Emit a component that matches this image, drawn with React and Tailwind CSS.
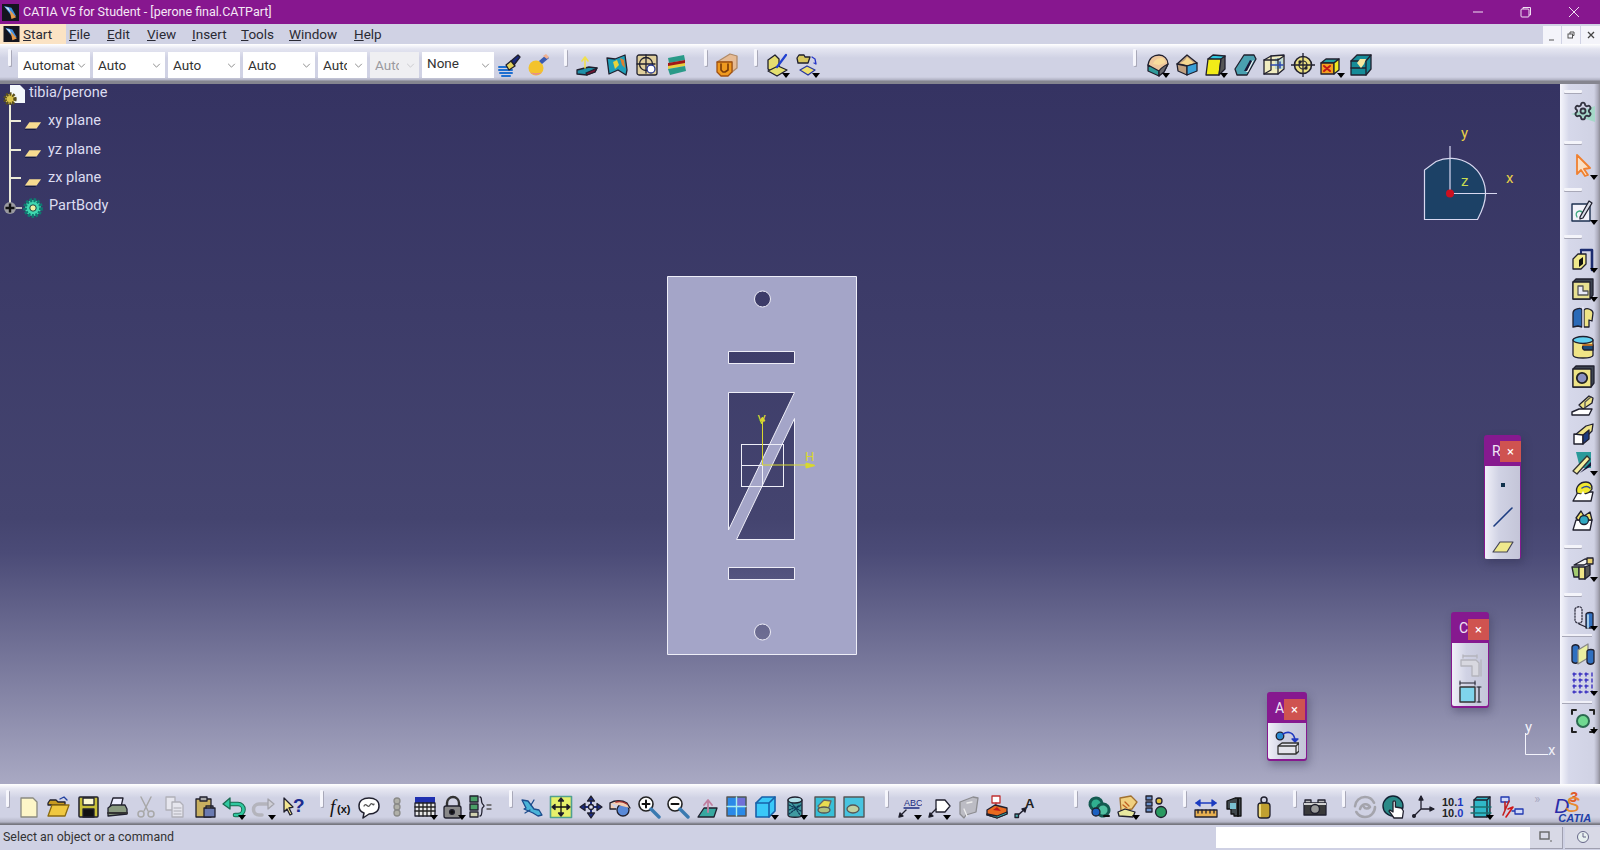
import { Settings } from "lucide-react";

const Svg = ({ children, className = "h-6 w-6" }) => (
  <svg viewBox="0 0 24 24" className={className} fill="none" stroke="#20202e" strokeWidth="1.3" strokeLinejoin="round" strokeLinecap="round">
    {children}
  </svg>
);

const AppGlyph = ({ className }) => (
  <svg viewBox="0 0 18 18" className={className}>
    <rect width="18" height="18" fill="#15151f" />
    <path d="M2 2l8 2 5 9-6-2z" fill="#3f8fe0" />
    <path d="M8 6l7 8-5 2z" fill="#e89a4a" />
    <path d="M3 3l4 1 2 5z" fill="#d8e8f8" />
  </svg>
);

// top toolbar
const Brush = () => <Svg><path d="M2 14h11M2 17h13M3 20h12M5 23h8" stroke="#1e6fd0" strokeWidth="2" /><path d="M14 8l7-6 2 2-6 8z" fill="#1a2a80" /><path d="M9 12l5-4 4 5-6 4z" fill="#e4d25a" /></Svg>;
const PaintBall = () => <Svg><circle cx="10" cy="15" r="7.5" fill="#f3c32c" stroke="none" /><path d="M4 19a8 8 0 0012 0 9 6 0 01-12 0z" fill="#e070c0" stroke="none" /><path d="M13 8l7-6 3 3-7 6z" fill="#3a5ab0" stroke="none" /><path d="M17 3l3-2 3 3-2 2z" fill="#f0b090" stroke="none" /></Svg>;
const SlabArrow = () => <Svg><path d="M2 17l12-3 8 1-2 4-8 3-10-1z" fill="#1f8fa8" /><path d="M11 20l9-4 2-1-2 4-8 3z" fill="#7a1530" /><path d="M10 15V5M7 8l3-4 3 4" stroke="#f0e050" strokeWidth="1.6" /></Svg>;
const SurfBlob = () => <Svg><path d="M2 5l8 1 10-4 2 15-1 5-8-5-9 4z" fill="#1f9fb8" /><path d="M8 9l4-2 2 5-4 4z" fill="#e9d33a" stroke="none" /><path d="M15 5l4 2 1 8-3-3z" fill="#e08030" stroke="none" /></Svg>;
const Target = () => <Svg><rect x="2" y="2" width="20" height="20" rx="2" fill="#e0cf9c" /><circle cx="11" cy="11" r="6.5" /><path d="M11 2v18M2 11h18" /><circle cx="16" cy="16" r="4" fill="#fff" stroke="#25358f" /></Svg>;
const Layers = () => <Svg><path d="M3 5l16-3 1 5-16 3z" fill="#2a9a88" stroke="none" /><path d="M3 10l17-3v5L3 15z" fill="#a01818" stroke="none" /><path d="M3 13l17-3v3L3 16z" fill="#e8d040" stroke="none" /><path d="M3 16l17-3 1 5-16 4z" fill="#2a9a88" stroke="none" /></Svg>;
const UBlock = () => <Svg><path d="M2 9L15 1l7 2v12l-5 4V9z" fill="#e6bb94" stroke="#b08a68" /><path d="M2 9h15v10l-4 4H6l-4-4z" fill="#ef9a20" stroke="#a05010" /><path d="M6 11v6l2 2h2l3-2v-6" stroke="#7a3a08" strokeWidth="1.6" /></Svg>;
const SketchPlane = () => <Svg><path d="M2 7l7-5 4 4v9l-7 4-4-3z" fill="#e4dc70" /><path d="M2 18l10-5 9 4-10 6z" fill="#e4e070" /><path d="M11 14l9-12" stroke="#2040d0" strokeWidth="2.2" /></Svg>;
const FolderPlane = () => <Svg><path d="M1 5l2-3h5l1 2h5l-2 6H2z" fill="#d8c860" /><path d="M16 4l3 2 1 5M20 11l-2-1" stroke="#2838c8" /><path d="M4 17l7-4 8 4-7 5z" fill="#eee070" stroke="#2838a0" /></Svg>;
const FilletTan = () => <Svg><path d="M2 12C3 5 8 2 13 2c5 0 9 4 9 9l-4 8-5 3z" fill="#eec79c" /><path d="M7 11c1-3 4-6 8-6 3 0 4 2 4 5l-6 2z" fill="#f8dc9c" stroke="none" /><path d="M2 12l11 6v5L2 18z" fill="#2f9a9a" /><path d="M13 18c2-3 5-5 9-7l-4 8-5 4z" fill="#6a6a70" /></Svg>;
const ChamferBox = () => <Svg><path d="M2 11l10-9 10 8-10 3z" fill="#c0a080" /><path d="M5 10c3-1 6-3 7-6l7 6-7 2z" fill="#f5d890" stroke="none" /><path d="M2 11l10 2v9l-9-4z" fill="#c0a080" /><path d="M12 13l10-3v8l-10 4z" fill="#3aa0d8" /></Svg>;
const YellowBox = () => <Svg><path d="M4 6l5-4 12 1-2 5z" fill="#30c8e0" /><path d="M4 6h13l-2 16H2z" fill="#f2ec18" /><path d="M17 6l4-3v13l-6 6z" fill="#555" /></Svg>;
const TealPara = () => <Svg><path d="M2 16l9-14h10l2 4-9 16H4z" fill="#4aa0b0" /><path d="M13 19l6-11 2-1-1 2-5 10z" fill="#f0f0f0" stroke="none" /><path d="M11 18l6-11 2 1-5 10z" fill="#181838" stroke="none" /></Svg>;
const WireBox = () => <Svg><path d="M2 7l7-4 13-1v14l-6 5H2z" fill="#f0ecc0" /><path d="M13 5h8v11h-8z" fill="#a0d0e0" opacity=".6" stroke="none" /><path d="M9 3v14l-7 4M16 6v15M2 7h14l6-4" /><path d="M9 12h12M18 9v6" stroke="#2c4ab0" strokeWidth="1.5" /></Svg>;
const Crosshair = () => <Svg><circle cx="12" cy="12" r="8.5" fill="#eadf80" strokeWidth="1.6" /><circle cx="12" cy="12" r="4" strokeWidth="1.2" /><path d="M12 0v24M0 12h24" /><circle cx="9" cy="9" r="1" fill="#333" /><circle cx="15" cy="15" r="1" fill="#333" /></Svg>;
const OrangeBox = () => <Svg><path d="M1 10l5-4h13l-5 4z" fill="#20a0a0" /><path d="M1 10h13v11H1z" fill="#f4a020" /><path d="M14 10l5-4v11l-5 4z" fill="#f0ea20" /><path d="M4 13l6 5M10 13l-6 5" stroke="#c01818" strokeWidth="2" /></Svg>;
const TealChest = () => <Svg><path d="M2 8l6-6h14v14l-5 6H2z" fill="#158c98" /><path d="M2 8h15l5-6M17 8v14M2 15h15" /><path d="M8 10l3-4h6l-2 5-3 4z" fill="#f5e8a0" stroke="none" /></Svg>;

// bottom toolbar, file group
const NewDoc = () => <Svg><path d="M4 3h12l4 4v15H4z" fill="#fdf6c8" stroke="#8a8a80" /></Svg>;
const OpenFolder = () => <Svg><path d="M2 8l2-3h6l2 2h7v3H2z" fill="#c89a20" /><path d="M2 21l4-11h17l-4 11z" fill="#f0c840" stroke="#8a6a10" /><path d="M14 4l4-2 3 3" stroke="#2040a0" /></Svg>;
const Floppy = () => <Svg><rect x="3" y="2" width="19" height="20" rx="1" fill="#c9c03a" strokeWidth="1.5" /><rect x="7" y="3" width="11" height="7" fill="#fdf9d0" /><rect x="7" y="14" width="11" height="8" fill="#111" /></Svg>;
const Printer = () => <Svg><path d="M8 3h10l-2 9H5z" fill="#eef" /><path d="M3 13l4-3h13l2 4v5l-19 2z" fill="#8a9a80" /><path d="M3 18h19" stroke="#333" strokeWidth="2" /></Svg>;
const Scissors = () => <Svg><g stroke="#a8a8a8" strokeWidth="1.5"><path d="M7 2l7 14M17 2l-7 14" /><circle cx="7" cy="19" r="3" /><circle cx="17" cy="19" r="3" /></g></Svg>;
const CopyDoc = () => <Svg><g fill="#e6e6ee" stroke="#b0b0b8"><path d="M3 2h9v13H3z" /><path d="M9 7h8l3 3v12H9z" /></g><path d="M11 13h7M11 16h7M11 19h7" stroke="#c0c0c8" /></Svg>;
const Paste = () => <Svg><rect x="3" y="4" width="15" height="18" fill="#c8b060" /><rect x="7" y="2" width="7" height="4" fill="#aaa" /><rect x="11" y="13" width="11" height="9" fill="#6a7ab0" /><path d="M13 13v-2h7v2" /></Svg>;
const Undo = () => <Svg><path d="M6 9h10a5 5 0 010 11h-3" stroke="#1a6a50" strokeWidth="4.6" /><path d="M6 9h10a5 5 0 010 11h-3" stroke="#30c8a0" strokeWidth="2.6" /><path d="M1 9l7-6v11z" fill="#30c8a0" stroke="#1a6a50" /></Svg>;
const Redo = () => <Svg><path d="M18 9H8a5 5 0 000 11h3" stroke="#b4b4bc" strokeWidth="3.5" /><path d="M23 9l-6-5v10z" fill="#cfcfd6" stroke="#a4a4ac" /></Svg>;
const WhatsThis = () => <Svg><path d="M3 3l9 9-4 1 3 6-2 1-3-6-3 3z" fill="#f2e590" /><text x="12" y="17" fontSize="19" fontWeight="700" fill="#1c2c90" stroke="none" fontFamily="Liberation Sans, sans-serif">?</text></Svg>;
const Fx = () => <Svg><text x="1" y="18" fontSize="19" fontFamily="Liberation Serif, serif" fontStyle="italic" fill="#111" stroke="none">f</text><text x="8" y="18" fontSize="11" fontWeight="700" fontFamily="Liberation Sans, sans-serif" fill="#111" stroke="none">(x)</text></Svg>;
const Bubble = () => <Svg><path d="M12 3c6 0 10 3 10 8s-4 8-10 8l-6 4 1-5c-3-1-5-4-5-7 0-5 4-8 10-8z" fill="#fff" strokeWidth="1.5" /><path d="M7 11c2-4 4 3 6-1s3 2 4-1" stroke="#555" /></Svg>;
const Lights = () => <Svg><g fill="#b0b0a8" stroke="#8a8a88"><circle cx="12" cy="6" r="3" /><circle cx="12" cy="12" r="3" /><circle cx="12" cy="18" r="3" /></g></Svg>;
const TableGrid = () => <Svg><rect x="2" y="2" width="20" height="6" fill="#2030b0" stroke="none" /><rect x="2" y="8" width="20" height="13" fill="#e8e8e8" /><path d="M2 12h20M2 16h20M6 8v13M10 8v13M14 8v13M18 8v13" stroke="#222" /></Svg>;
const Padlock = () => <Svg><path d="M6 12V8a6 6 0 0112 0v4" stroke="#333" strokeWidth="2.4" /><rect x="3" y="11" width="17" height="12" rx="2" fill="#888" /><circle cx="11" cy="17" r="2.4" fill="#111" /></Svg>;
const Bracket = () => <Svg><rect x="1" y="1" width="8" height="6" fill="#4aa068" /><rect x="1" y="9" width="8" height="6" fill="#4aa068" /><rect x="1" y="17" width="8" height="5" fill="#d0d0b0" /><path d="M11 2c2 0 1 4 2 6s2 2 2 3-2 1-2 3 0 7-2 7" /><path d="M18 10h4M18 14h4" stroke="#555" /></Svg>;

// view group
const FlyPlane = () => <Svg><path d="M2 5l6 1 6 8 5 1 3 5-4 1-5-3-9-4 2-1-4-8z" fill="#4ab4d8" stroke="#1c4c8c" /><path d="M14 5l-3 5M5 18l5-3" stroke="#1c4c8c" /></Svg>;
const FitAll = () => <Svg><rect x="1.5" y="1.5" width="21" height="21" fill="#e6f06a" stroke="#50a090" strokeWidth="1.6" /><path d="M12 5v14M5 12h14" stroke="#111" /><path d="M12 3l-2.5 3h5zM12 21l-2.5-3h5zM3 12l3-2.5v5zM21 12l-3-2.5v5z" fill="#111" /></Svg>;
const PanArrows = () => <Svg><path d="M12 3v18M3 12h18" stroke="#1c2c80" strokeWidth="2" /><path d="M12 1l-3.5 5h7zM12 23l-3.5-5h7zM1 12l5-3.5v7zM23 12l-5-3.5v7z" fill="#1c2c80" /><circle cx="12" cy="12" r="2.5" fill="#e0e0f0" /></Svg>;
const RotateHand = () => <Svg><circle cx="15" cy="15" r="6" fill="#5a8ad8" /><path d="M2 8c5-3 12-3 17 0l3 5M2 8v6h6" fill="#f4cdb0" /><path d="M8 7c3-1 8 0 11 2" stroke="#a03030" strokeWidth="1.5" /></Svg>;
const ZoomIn = () => <Svg><circle cx="9" cy="9" r="7" fill="#fff" stroke="#222" strokeWidth="1.6" /><path d="M14 14l8 8" stroke="#3a7ab0" strokeWidth="3.4" /><path d="M5.5 9h7M9 5.5v7" stroke="#111" strokeWidth="2" /></Svg>;
const ZoomOut = () => <Svg><circle cx="9" cy="9" r="7" fill="#fff" stroke="#222" strokeWidth="1.6" /><path d="M14 14l8 8" stroke="#3a7ab0" strokeWidth="3.4" /><path d="M5.5 9h7" stroke="#111" strokeWidth="2" /></Svg>;
const NormalView = () => <Svg><path d="M2 22l6-9h13l-3 9z" fill="#38a8a0" /><path d="M12 17V6M8 10l4-5 4 5" stroke="#c080a0" strokeWidth="1.8" /></Svg>;
const FourPane = () => <Svg><rect x="2" y="2" width="19" height="19" fill="#2a8ae8" stroke="#555" strokeWidth="1.5" /><path d="M12 3h8v8h-8z" fill="#7070d8" stroke="none" /><path d="M11.5 2v19M2 11.5h19" stroke="#aee" strokeWidth="1.4" /></Svg>;
const BlueCube = () => <Svg><path d="M2 8l6-6h13v14l-6 6H2z" fill="#3ac8f8" stroke="#1860a8" strokeWidth="1.6" /><path d="M2 8h13l6-6M15 8v14" stroke="#1860a8" strokeWidth="1.6" /></Svg>;
const PatternCyl = () => <Svg><path d="M4 5v15c0 3 14 3 14 0V5" fill="#3f9aa0" /><ellipse cx="11" cy="5" rx="7" ry="3" fill="#b0e0e8" /><path d="M5 10l12 6M5 15l12-5M5 19l12-9M8 8l8 12" stroke="#0f3a58" strokeDasharray="1.5 1.5" /></Svg>;
const PicYellow = () => <Svg><rect x="2" y="2" width="20" height="20" fill="#38c0d8" stroke="#555" strokeWidth="1.4" /><path d="M5 11l6-6 7 1-2 6-8 3z" fill="#e8dc50" stroke="#666" /><ellipse cx="11" cy="15" rx="6" ry="3" fill="#b0c080" stroke="#555" /></Svg>;
const PicCyan = () => <Svg><rect x="2" y="2" width="20" height="20" fill="#48c4e0" stroke="#555" strokeWidth="1.4" /><ellipse cx="11" cy="14" rx="6" ry="4" fill="#c0d0a0" stroke="#555" /></Svg>;

// annotation group
const AbcArrow = () => <Svg><text x="6" y="11" fontSize="9" fontFamily="Liberation Sans, sans-serif" fill="#1c2c80" stroke="none">ABC</text><path d="M6 13h15" stroke="#1c2c80" /><path d="M8 15L2 21" /><path d="M1 22l1-4 3 3z" fill="#111" /></Svg>;
const TagArrow = () => <Svg><path d="M9 5h9l5 6-5 6H9z" fill="#fff" /><path d="M9 14L3 20" /><path d="M2 22l1-4 3 3z" fill="#111" /></Svg>;
const GrayFlag = () => <Svg><path d="M4 7l13-5 5 1-2 14-10 3-2 3-4-4z" fill="#bcbcc4" stroke="#8c8c90" /><path d="M8 14l3 7M11 8l5-1" stroke="#eee" /></Svg>;
const RedStack = () => <Svg><rect x="7" y="1" width="8" height="7" fill="#fff" stroke="#c03030" /><path d="M11 8v4" stroke="#c03030" /><path d="M2 15l8-5 12 3v6l-10 4-10-3z" fill="#e86a20" /><path d="M2 19l10 2 10-4v2l-10 4-10-3z" fill="#38b8b0" /><path d="M8 15l4-3 4 4z" fill="#c01818" stroke="none" /></Svg>;
const AArrow = () => <Svg><text x="11" y="13" fontSize="13" fontWeight="700" fontFamily="Liberation Sans, sans-serif" fill="#222" stroke="none">A</text><path d="M3 21l9-8" strokeWidth="1.6" /><rect x="1" y="19" width="3.5" height="3.5" fill="#4ab0b0" /><path d="M12 13l-4 1 3 3z" fill="#111" /></Svg>;

// analysis group
const GreenGears = () => <Svg><circle cx="9" cy="9" r="6" fill="#30b090" stroke="#145a50" strokeWidth="3" strokeDasharray="2 1.2" /><circle cx="16" cy="15" r="6" fill="#50c0a0" stroke="#145a50" strokeWidth="3" strokeDasharray="2 1.2" /><circle cx="9" cy="17" r="4" fill="#1c60c0" /><path d="M17 21h5" stroke="#111" strokeWidth="2" /></Svg>;
const PaperFold = () => <Svg><path d="M4 3l11-2 6 6-5 7-11 2z" fill="#f0d080" stroke="#a07030" /><path d="M2 17l7-3 10 3-2 5-14-1z" fill="#e8e8a0" /><path d="M9 7l4 4M7 10l4 3" stroke="#c06020" /></Svg>;
const TreeBlocks = () => <Svg><rect x="1" y="1" width="6" height="4" fill="#6a90c8" /><rect x="1" y="7" width="6" height="4" fill="#6a90c8" /><rect x="1" y="13" width="6" height="4" fill="#6a90c8" /><circle cx="16" cy="17" r="5.5" fill="#2a9a60" /><circle cx="14" cy="6" r="3" fill="#e0c040" /></Svg>;
const RulerArrow = () => <Svg><path d="M2 8h20" stroke="#1c3cc0" strokeWidth="1.4" /><path d="M2 8l4-3v6zM22 8l-4-3v6z" fill="#1c3cc0" stroke="#1c3cc0" /><rect x="1" y="15" width="22" height="7" fill="#e8b050" /><path d="M4 15v3M8 15v3M12 15v3M16 15v3M20 15v3" /></Svg>;
const DarkBox = () => <Svg><path d="M4 6l8-3h6v18h-7v-2H8v-5H4z" fill="#40484c" stroke="#111" /><path d="M7 8h6v6H7z" fill="#7ac0d0" stroke="none" /><path d="M15 4v17" stroke="#111" strokeWidth="2" /></Svg>;
const Weight = () => <Svg><circle cx="12" cy="5" r="3" strokeWidth="1.5" /><rect x="6" y="8" width="12" height="15" rx="3" fill="#c0a030" /><path d="M8 10v11" stroke="#eedc80" strokeWidth="2" /></Svg>;
const Camera = () => <Svg><path d="M1 8h22v12H1z" fill="#3a3a3a" /><rect x="2" y="5" width="6" height="3" fill="#bbb" /><rect x="15" y="5" width="7" height="3" fill="#bbb" /><path d="M1 8h22v2H1z" fill="#d0d0d0" stroke="none" /><circle cx="12" cy="14" r="4.5" fill="#999" strokeWidth="1.4" /></Svg>;
const Swirl = () => <Svg><g stroke="#a4a4ac" strokeWidth="2.6"><circle cx="12" cy="12" r="10" strokeDasharray="26 6" /><path d="M7 14c2-6 8-6 10-2-2 2-5 2-6 0" /></g></Svg>;
const GlobeHand = () => <Svg><circle cx="11" cy="11" r="10" fill="#2a8a88" stroke="#123" strokeWidth="1.4" /><path d="M12 23l-5-7 1-1 3 2V7a1.2 1.2 0 012.4 0v5l6 1 2 3-1 7z" fill="#fff" /></Svg>;
const Axes = () => <Svg><path d="M10 14V2M10 14h12M10 14l-7 7" strokeWidth="1.3" /><path d="M10 1L8 5h4zM23 14l-4-2v4z" fill="#222" /><circle cx="3" cy="21" r="1.4" fill="#222" /></Svg>;
const Numbers = () => <Svg><text x="1" y="11" fontSize="11" fontWeight="700" fontFamily="Liberation Sans, sans-serif" fill="#222" stroke="none">10.<tspan fill="#1c38c0">1</tspan></text><text x="1" y="22" fontSize="11" fontWeight="700" fontFamily="Liberation Sans, sans-serif" fill="#222" stroke="none">10.<tspan fill="#1c38c0">0</tspan></text></Svg>;
const TealPrism = () => <Svg><path d="M4 5l3-3h13v17l-3 3H4z" fill="#30b8c8" strokeWidth="1.3" /><path d="M4 5h13l3-3M17 5v17" /><path d="M1 12h20M1 18h20" stroke="#187070" /></Svg>;
const SwapLink = () => <Svg><rect x="1" y="2" width="8" height="5" fill="#d0d8f8" stroke="#2038b0" /><path d="M5 7v8M9 6L3 20" stroke="#c02020" strokeWidth="1.6" /><path d="M8 14l5-2-7 10" stroke="#d01818" strokeWidth="1.6" /><path d="M12 16h4" stroke="#2038b0" /><rect x="15" y="14" width="8" height="5" fill="#d0d8f8" stroke="#2038b0" /></Svg>;

// right rail
const GearWedge = () => <div className="relative flex h-7 w-7 items-center justify-center"><div className="absolute h-0 w-0 translate-y-[3px] border-y-[8px] border-r-[24px] border-y-transparent border-r-[#a5d8c8]" /><Settings className="relative h-[20px] w-[20px] text-[#333340]" strokeWidth={2.2} /></div>;
const OrangeCursor = () => <Svg><path d="M6 2l13 13-6 1 4 6-3 1-4-6-4 4z" fill="#fbe0c4" stroke="#f08030" strokeWidth="1.8" /></Svg>;
const SketchPen = () => <Svg><rect x="1" y="5" width="18" height="17" fill="#f2f2fa" stroke="#1c3050" strokeWidth="1.4" /><path d="M6 18c-3-5 3-8 6-4" stroke="#40a880" /><path d="M9 18l9-16 3 2-9 15-3 1z" fill="#d8dce8" /></Svg>;
const PadIcon = () => <Svg><path d="M10 2h11v20" stroke="#1c2c70" strokeWidth="2.6" /><path d="M10 2v7" stroke="#1c2c70" strokeWidth="2" /><path d="M2 11l5-5h8v10l-5 5H2z" fill="#f2ea8c" /><path d="M8 12l4-3v7l-4 3z" fill="#111" stroke="none" /></Svg>;
const PocketIcon = () => <Svg><path d="M2 5l3-3h17v16l-3 4H2z" fill="#3c4450" /><rect x="2" y="5" width="17" height="17" fill="#e8e090" /><path d="M7 9h5v5h5v4H7z" fill="#e8e8f8" stroke="#555" /></Svg>;
const ShaftIcon = () => <Svg><path d="M2 7c0-4 8-6 9-3v17l-4-1-5 1z" fill="#2a6ab8" /><path d="M13 4c3-3 9 0 9 3l-1 8-3-1v7h-5z" fill="#efe486" /><path d="M12 1v22" stroke="#eef" strokeWidth="1.2" /></Svg>;
const GrooveCyl = () => <Svg><path d="M2 5v15c0 4 20 4 20 0V5" fill="#efe486" /><ellipse cx="12" cy="5" rx="10" ry="3.5" fill="#60d0f0" /><path d="M22 10H13c-2 1-2 4 0 5h9z" fill="#1c4a78" /><path d="M12 10h9" stroke="#e08020" strokeWidth="1.6" /></Svg>;
const HoleSquare = () => <Svg><path d="M2 5l3-3h18v17l-3 4H2z" fill="#3c4450" /><rect x="2" y="5" width="18" height="18" fill="#efe486" /><circle cx="11" cy="14" r="5.2" fill="#8a90c0" stroke="#222" strokeWidth="1.8" /></Svg>;
const RibIcon = () => <Svg><path d="M8 12l10-9 4 2-1 5-9 6z" fill="#efe486" /><path d="M14 16V9l6-5" stroke="#555" /><path d="M1 22v-3l7-3h13l-3 6z" fill="#fff" strokeWidth="1.4" /></Svg>;
const SlotIcon = () => <Svg><path d="M4 13l11-9 7-2-1 7-6 6z" fill="#efe486" /><path d="M3 22V12l9 1v9z" fill="#fff" strokeWidth="1.4" /><path d="M12 22v-9l6-5v9z" fill="#1c3c80" /></Svg>;
const LoftIcon = () => <Svg><path d="M5 1h15v16H9z" fill="#2a9a9a" stroke="none" /><path d="M9 22l11-7v-4" fill="#181838" stroke="none" /><path d="M2 20L16 5l3 3L6 23z" fill="#f5eda0" stroke="#333" /></Svg>;
const BlobIcon = () => <Svg><path d="M2 21l5-9h15l-2 9z" fill="#fff" strokeWidth="1.3" /><path d="M6 13c-2-6 3-11 9-11 4 0 6 3 6 7-3 5-8 6-15 4z" fill="#f0e830" /><path d="M11 8c3-2 6-2 8 0" stroke="#2848a0" strokeWidth="1.5" /><path d="M8 18l4-7 4 7z" fill="#fff" stroke="none" /></Svg>;
const SurfBox = () => <Svg><path d="M2 21l3-10h16l-2 10z" fill="#fff" strokeWidth="1.3" /><path d="M5 9l5-7 3 5 6-4 2 8H7z" fill="#f0e06a" /><circle cx="13" cy="11" r="4.5" fill="#30a8c0" /></Svg>;
const BadgeBox = () => <Svg><path d="M3 8l11-6 8 1-9 5z" fill="#f4f4f4" /><path d="M1 10h7v10H3z" fill="#a4cc70" /><path d="M8 10h6v12H8z" fill="#efe486" /><path d="M14 10l5-2v10l-5 4z" fill="#555" /><rect x="16" y="1" width="6" height="6" fill="#e8d070" /></Svg>;
const GhostCyl = () => <Svg><path d="M4 3c2-3 6-3 7 0v12c-1 3-5 3-7 0z" strokeDasharray="1.5 1.5" stroke="#334" fill="#e0e0f0" /><path d="M8 18l7 3" /><path d="M15 8c1-2 7-2 7 0v14h-7z" fill="#3070c0" /><path d="M17 9v13" stroke="#c0e0f0" strokeWidth="1.6" /></Svg>;
const MirrorIcon = () => <Svg><path d="M1 5c1-3 6-3 7 0v14c-1 3-6 3-7 0z" fill="#3070c0" /><path d="M7 8l10-6v14L7 22z" fill="#eaf0a0" stroke="#888" /><path d="M16 9c1-2 7-2 7 0v11c-1 3-6 3-7 0z" fill="#3070c0" /></Svg>;
const DotGrid = () => <Svg><path d="M2 3h18M2 9h18M2 15h18M2 21h18M3 2v20M9 2v20M15 2v20M21 2v20" stroke="#3a30c0" strokeWidth="1.4" strokeDasharray="3 3" /></Svg>;
const ScaleRing = () => <Svg><circle cx="12" cy="12" r="6" fill="#70d890" stroke="#2c6a50" strokeWidth="2" /><path d="M1 5V1h4M23 5V1h-4M1 19v4h4M23 19v4h-4" stroke="#222" strokeWidth="2" /></Svg>;

// floating bars
const PointDot = () => <Svg><rect x="10" y="10" width="4" height="4" fill="#11324c" stroke="none" /></Svg>;
const LineIcon = () => <Svg><path d="M3 21L21 3" stroke="#1c3c80" strokeWidth="1.6" /></Svg>;
const PlaneIcon = () => <Svg><path d="M2 18l7-10h13l-6 10z" fill="#efe98c" stroke="#445" strokeWidth="1.2" /></Svg>;
const GrayCorner = () => <Svg><g stroke="#b4b4bc"><path d="M5 2h14M5 1v3M19 1v3" /><path d="M3 6h15l3 3v13h-7V12H3z" fill="#d8d8e0" /><path d="M23 6v16" /></g></Svg>;
const DimBox = () => <Svg><rect x="2" y="7" width="15" height="15" fill="#7fd4ec" stroke="#333" strokeWidth="1.4" /><path d="M2 3h15M21 7v15" strokeWidth="1.2" /><path d="M2 1v4M17 1v4M19 7h4M19 22h4" strokeWidth="1" /></Svg>;
const SphereToBox = () => <Svg><circle cx="5" cy="5" r="3.8" fill="#2a8ad0" /><path d="M8 3c5-3 11-2 12 6" stroke="#2038c0" strokeWidth="1.6" /><path d="M20 11l-3-3h6z" fill="#2038c0" stroke="#2038c0" /><path d="M3 15l4-3h17l-3 3zM3 15h18v8H3zM21 15l3-3v8l-3 3z" fill="#e4e4ec" stroke="#333" strokeWidth="1.3" /></Svg>;

const Drop = () => <span className="absolute bottom-0 left-[19px] h-0 w-0 border-x-[4px] border-t-[5px] border-x-transparent border-t-black" />;

const Group = ({ items, slot, className = "" }) => (
  <div className={`flex ${className}`}>
    {items.map(([Icon, drop], i) => (
      <div key={i} className={`relative flex h-[26px] shrink-0 items-center justify-center ${slot}`}>
        <Icon />
        {drop && <Drop />}
      </div>
    ))}
  </div>
);

const Grip = ({ className = "" }) => <div className={`h-[17px] w-[3px] shrink-0 self-start rounded-[1px] bg-[#f6f6fc] shadow-[1px_1px_0_#a8a8b8] ${className}`} />;

const Combo = ({ label, w, disabled, none, clip }) => (
  <div className={`flex h-[26px] items-center justify-between pl-[5px] pr-[4px] ${w} ${disabled ? "bg-[#efeff2] text-[#9a9aa0]" : "bg-white text-[#333]"}`}>
    <span className={`block overflow-hidden whitespace-nowrap ${clip ? "w-[24px]" : ""} ${none ? "-translate-y-[2px]" : ""}`}>{label}</span>
    <svg viewBox="0 0 10 6" className="h-[5px] w-[9px]" fill="none" stroke={disabled ? "#c4c4c8" : "#777"}><path d="M1 1l4 4 4-4" /></svg>
  </div>
);

const Handle = ({ className = "" }) => <div className={`ml-[4px] h-[3px] w-[18px] shrink-0 rounded-[1px] bg-[#f4f4fa] shadow-[0_1px_0_#a8a8b8] ${className}`} />;
const RailIcon = ({ Icon, drop, className = "h-[29px]" }) => (
  <div className={`relative mr-[3px] flex w-[29px] shrink-0 items-center justify-center self-end ${className}`}>
    <Icon />
    {drop && <span className="absolute bottom-[1px] left-[22px] h-0 w-0 border-x-[4px] border-t-[5px] border-x-transparent border-t-black" />}
  </div>
);

const Floater = ({ letter, pos, closePos, children }) => (
  <div className={`absolute flex flex-col overflow-hidden rounded-[3px] bg-[#86198f] shadow-[2px_4px_8px_rgba(40,40,70,0.35)] ${pos}`}>
    <div className="relative h-[31px] shrink-0 pl-[8px] pt-[7px] text-[14px] leading-[18px] text-[#f0e4f4]">
      {letter}
      <div className={`absolute flex h-[21px] w-[21px] items-center justify-center bg-[#cf5350] text-[13px] leading-none text-white ${closePos}`}>×</div>
    </div>
    <div className="mx-[1px] mb-[2px] flex flex-1 flex-col items-center rounded-b-[2px] bg-[linear-gradient(to_right,#f0f0f8,#d0d2e4_40%,#c4c5d8)]">{children}</div>
  </div>
);

const TreeRow = ({ icon, label, className }) => (
  <div className={`flex items-center ${className}`}>
    {icon}
    <span className="whitespace-nowrap text-[14.5px] text-[#dcdcf0]">{label}</span>
  </div>
);

const TreePlane = () => (
  <svg viewBox="0 0 20 12" className="ml-[24px] mr-[6px] mt-[8px] h-[12px] w-[18px]">
    <path d="M1 10l5-7h13l-5 7z" fill="#f7dc90" />
    <path d="M1 11h12" stroke="#111a3c" />
  </svg>
);

const menus = [
  ["F", "ile", "w-[38px]"],
  ["E", "dit", "w-[40px]"],
  ["V", "iew", "w-[45px]"],
  ["I", "nsert", "w-[49px]"],
  ["T", "ools", "w-[48px]"],
  ["W", "indow", "w-[65px]"],
  ["H", "elp", "w-[40px]"],
];

export default function App() {
  return (
    <div className="flex h-[850px] w-[1600px] flex-col overflow-hidden bg-[#d0d2e4] font-['Roboto',sans-serif] text-[13.5px]">
      <div className="flex h-6 shrink-0 items-center bg-[#87178f] pl-[2px] text-white">
        <AppGlyph className="h-[17px] w-[17px]" />
        <span className="ml-[4px] text-[12.5px] text-[#f5e8f6]">CATIA V5 for Student - [perone final.CATPart]</span>
        <div className="ml-auto flex pr-[2px]">
          <div className="flex h-6 w-12 items-center justify-center"><svg viewBox="0 0 12 12" className="h-3 w-3" stroke="#f0e0f2"><path d="M1 6h10" /></svg></div>
          <div className="flex h-6 w-12 items-center justify-center"><svg viewBox="0 0 12 12" className="h-3 w-3" fill="none" stroke="#f0e0f2"><rect x="1" y="3" width="8" height="8" rx="1" /><path d="M3 3V1.5h7.5V9H9" /></svg></div>
          <div className="flex h-6 w-12 items-center justify-center"><svg viewBox="0 0 12 12" className="h-3 w-3" stroke="#f0e0f2"><path d="M1 1l10 10M11 1L1 11" /></svg></div>
        </div>
      </div>

      <div className="flex h-5 shrink-0 items-center bg-[#d0d2e4] text-[#2a2a34]">
        <div className="flex h-5 w-[66px] items-center bg-[#fbe3c4] pl-[3px]">
          <AppGlyph className="h-[16px] w-[17px]" />
          <span className="ml-[3px]"><u>S</u>tart</span>
        </div>
        <div className="ml-[3px] flex">
          {menus.map(([first, rest, w]) => (
            <span key={first} className={w}><u>{first}</u>{rest}</span>
          ))}
        </div>
        <div className="ml-auto flex gap-[1px] pt-[1px] text-[#444]">
          <div className="flex h-[18px] w-[18px] items-end justify-center bg-[#f4f4fa] pb-[3px]"><svg viewBox="0 0 8 8" className="h-2 w-2" stroke="#555"><path d="M1 7h5" /></svg></div>
          <div className="flex h-[18px] w-[18px] items-center justify-center bg-[#f4f4fa]"><svg viewBox="0 0 8 8" className="h-2 w-2" fill="none" stroke="#555"><rect x="1" y="3" width="4.5" height="4" /><path d="M3 3V1h4v3.5H5.5" /></svg></div>
          <div className="flex h-[18px] w-[19px] items-center justify-center bg-[#f4f4fa]"><svg viewBox="0 0 8 8" className="h-2 w-2" stroke="#444" strokeWidth="1.3"><path d="M1 1l6 6M7 1L1 7" /></svg></div>
        </div>
      </div>

      <div className="flex h-10 shrink-0 items-center pt-[2px] bg-[linear-gradient(to_bottom,#ffffff_0,#e4e5f1_5px,#d0d2e4_14px,#d0d2e4_33px,#b0b1c2_36px,#85858f_37px,#85858f_40px)]">
        <Grip className="ml-[8px] mt-[3px]" />
        <div className="ml-[7px] flex gap-[3px]">
          <Combo label="Automat" w="w-[72px]" />
          <Combo label="Auto" w="w-[72px]" />
          <Combo label="Auto" w="w-[72px]" />
          <Combo label="Auto" w="w-[72px]" />
          <Combo label="Auto" w="w-[49px]" clip />
          <Combo label="Auto" w="w-[49px]" clip disabled />
          <Combo label="None" w="w-[72px]" none />
        </div>
        <Group slot="w-[29.5px]" items={[[Brush], [PaintBall]]} />
        <Grip className="ml-[11px] mt-[3px]" />
        <Group slot="w-[30px]" className="ml-[4.5px]" items={[[SlabArrow], [SurfBlob], [Target], [Layers]]} />
        <Grip className="ml-[12px] mt-[3px]" />
        <Group slot="w-[29px]" className="ml-[5.5px]" items={[[UBlock]]} />
        <Grip className="ml-[12.5px] mt-[3px]" />
        <Group slot="w-[29.5px]" className="ml-[6.75px]" items={[[SketchPlane, true], [FolderPlane, true]]} />
        <Grip className="ml-[311px] mt-[3px]" />
        <Group slot="w-[29.1px]" className="ml-[6.75px]" items={[[FilletTan, true], [ChamferBox], [YellowBox, true], [TealPara], [WireBox], [Crosshair], [OrangeBox, true], [TealChest]]} />
      </div>

      <div className="flex min-h-0 flex-1">
        <div className="relative flex-1 bg-[linear-gradient(to_bottom,#353362_0%,#44446f_62%,#4b4b77_67%,#a9a9c3_100%)]">
          <svg viewBox="0 84 1560 700" className="absolute inset-0 h-full w-full" fontFamily="Roboto, sans-serif">
            <path
              fillRule="evenodd"
              fill="#a4a5c8"
              stroke="#eeeef8"
              d="M667.5 276.5H856.5V654.5H667.5Z M754.5 299a8 8 0 1016 0a8 8 0 10-16 0Z M754.5 632a8 8 0 1016 0a8 8 0 10-16 0Z M728.5 351.5H794.5V363.5H728.5Z M728.5 567.5H794.5V579.5H728.5Z M728.5 392.5H794.5L728.5 530Z M794.5 418.5V539.5H736.5Z"
            />
            <g stroke="#eeeef8" fill="none">
              <rect x="741.5" y="444.5" width="42" height="42" />
              <path d="M741.5 465.5H762.5M762.5 465.5V486.5" />
            </g>
            <g stroke="#d8d82e" fill="none">
              <path d="M762.5 465V420M762.5 465H814" />
              <path d="M806 463l9 2.5-9 2.5z" fill="#d8d82e" />
              <path d="M760 421l2.5-4 2.5 4z" fill="#d8d82e" />
            </g>
            <text x="757.5" y="424" fontSize="13" fill="#d8d82e">V</text>
            <text x="805" y="461" fontSize="13" fill="#d8d82e">H</text>

            <path d="M1424.5 219.5V170L1436 161.5A35 35 0 0 1 1485.5 194c0 9-4 18-8 25.5z" fill="#1c4166" stroke="#d8d8f0" strokeWidth="1.2" />
            <path d="M1450 146V193M1450 193.5H1497" stroke="#d8d8f0" strokeWidth="1.2" />
            <circle cx="1450" cy="193.5" r="4" fill="#cc0f1f" />
            <text x="1461" y="186" fontSize="15" fill="#c8dc50">z</text>
            <text x="1461" y="138" fontSize="15" fill="#e8d048">y</text>
            <text x="1506" y="183" fontSize="15" fill="#e8d048">x</text>

            <path d="M1525.5 733V754.5H1548" stroke="#f4f4fc" fill="none" />
            <text x="1525" y="732" fontSize="15" fill="#f0f0f8">y</text>
            <text x="1548" y="755" fontSize="15" fill="#f0f0f8">x</text>
          </svg>

          <div className="absolute left-0 top-0 w-[120px]">
            <div className="absolute left-[9px] top-[16px] h-[108px] w-[2px] bg-[#ecebd8]" />
            <div className="absolute left-[10px] top-[36px] h-[2px] w-[11px] bg-[#ecebd8]" />
            <div className="absolute left-[10px] top-[65px] h-[2px] w-[11px] bg-[#ecebd8]" />
            <div className="absolute left-[10px] top-[93px] h-[2px] w-[11px] bg-[#ecebd8]" />
            <div className="flex h-[18px] items-center">
              <svg viewBox="0 0 26 20" className="relative mt-[4px] h-[20px] w-[26px]">
                <path d="M10 0h10l5 5v13H10z" fill="#f4f8fc" />
                <circle cx="10" cy="14" r="5" fill="#d8c24a" stroke="#5a5020" strokeWidth="3.4" strokeDasharray="2 1.2" />
              </svg>
              <span className="ml-[3px] whitespace-nowrap text-[14.5px] text-[#dcdcf0]">tibia/perone</span>
            </div>
            <div className="mt-[5px] flex flex-col">
              <TreeRow icon={<TreePlane />} label="xy plane" className="h-[28.3px]" />
              <TreeRow icon={<TreePlane />} label="yz plane" className="h-[28.3px]" />
              <TreeRow icon={<TreePlane />} label="zx plane" className="h-[28.3px]" />
              <TreeRow
                className="h-[28.3px]"
                label="PartBody"
                icon={
                  <svg viewBox="0 0 44 24" className="relative mr-[5px] h-[24px] w-[44px]">
                    <circle cx="10" cy="14" r="6" fill="#9a9aa0" />
                    <path d="M10 9.5v9M5.5 14h9" stroke="#111" strokeWidth="2.4" />
                    <path d="M16 14h6" stroke="#ecebd8" strokeWidth="1.5" />
                    <circle cx="33" cy="14" r="8" fill="#40d8b0" stroke="#0e7a70" strokeWidth="3.8" strokeDasharray="2.4 1.4" />
                    <circle cx="33" cy="14" r="3.2" fill="#f0f0a0" stroke="#144" />
                  </svg>
                }
              />
            </div>
          </div>

          <Floater letter="R" pos="left-[1484px] top-[351px] h-[124px] w-[37px]" closePos="right-0 top-[6px]">
            <div className="flex h-[37px] shrink-0 items-center justify-center"><PointDot /></div>
            <div className="flex h-[28px] shrink-0 items-center justify-center"><LineIcon /></div>
            <div className="flex h-[30px] shrink-0 items-center justify-center"><PlaneIcon /></div>
          </Floater>
          <Floater letter="C" pos="left-[1451px] top-[528px] h-[96px] w-[38px]" closePos="right-0 top-[7px]">
            <div className="flex h-[35px] shrink-0 items-end justify-center"><GrayCorner /></div>
            <div className="flex h-[28px] shrink-0 items-center justify-center"><DimBox /></div>
          </Floater>
          <Floater letter="A" pos="left-[1267px] top-[608px] h-[69px] w-[40px]" closePos="right-[2px] top-[7px]">
            <div className="flex h-[36px] shrink-0 translate-y-[2px] items-center justify-center"><SphereToBox /></div>
          </Floater>
        </div>

        <div className="flex w-10 shrink-0 flex-col bg-[linear-gradient(to_right,#f6f6fc,#d6d8ea_9px,#d0d2e4_34px,#aaaaba_38px,#8e8e98_40px)] pt-[6px]">
          <Handle />
          <RailIcon Icon={GearWedge} className="h-[36px]" />
          <Handle className="mt-[12px]" />
          <RailIcon Icon={OrangeCursor} drop className="mt-[5px] h-[32px]" />
          <Handle className="mt-[7px]" />
          <RailIcon Icon={SketchPen} drop className="mt-[5px] h-[30px]" />
          <Handle className="mt-[9px]" />
          <RailIcon Icon={PadIcon} drop className="mt-[7px] h-[29px]" />
          <RailIcon Icon={PocketIcon} drop />
          <RailIcon Icon={ShaftIcon} />
          <RailIcon Icon={GrooveCyl} />
          <RailIcon Icon={HoleSquare} />
          <RailIcon Icon={RibIcon} />
          <RailIcon Icon={SlotIcon} />
          <RailIcon Icon={LoftIcon} drop />
          <RailIcon Icon={BlobIcon} />
          <RailIcon Icon={SurfBox} />
          <Handle className="mt-[10px]" />
          <RailIcon Icon={BadgeBox} drop className="mt-[6px] h-[29px]" />
          <Handle className="mt-[10px]" />
          <RailIcon Icon={GhostCyl} drop className="mt-[8px] h-[28px]" />
          <div className="mb-[3px] ml-[2px] mt-[2px] h-[2px] w-[30px] shrink-0 bg-[#f0f0f8] shadow-[0_1px_0_#a8a8b8]" />
          <RailIcon Icon={MirrorIcon} />
          <RailIcon Icon={DotGrid} drop />
          <div className="mb-[3px] ml-[2px] mt-[4px] h-[2px] w-[30px] shrink-0 bg-[#f0f0f8] shadow-[0_1px_0_#a8a8b8]" />
          <RailIcon Icon={ScaleRing} drop />
        </div>
      </div>

      <div className="flex h-[41px] shrink-0 items-center pt-[4px] bg-[linear-gradient(to_bottom,#ffffff_0,#e6e7f2_5px,#d0d2e4_14px,#d0d2e4_33px,#b4b5c6_38px,#77777f_40px,#77777f_41px)]">
        <Grip className="ml-[6px] mt-[2px]" />
        <Group slot="w-[29.3px]" className="ml-[5.35px]" items={[[NewDoc], [OpenFolder], [Floppy], [Printer], [Scissors], [CopyDoc], [Paste], [Undo, true], [Redo, true], [WhatsThis]]} />
        <Grip className="ml-[13px] mt-[2px]" />
        <Group slot="w-[28px]" className="ml-[4px]" items={[[Fx], [Bubble], [Lights], [TableGrid, true], [Padlock, true], [Bracket]]} />
        <Grip className="ml-[13.5px] mt-[2px]" />
        <Group slot="w-[29.3px]" className="ml-[5.5px]" items={[[FlyPlane], [FitAll], [PanArrows], [RotateHand], [ZoomIn], [ZoomOut], [NormalView], [FourPane], [BlueCube, true], [PatternCyl, true], [PicYellow], [PicCyan]]} />
        <Grip className="ml-[16px] mt-[2px]" />
        <Group slot="w-[29px]" className="ml-[7.5px]" items={[[AbcArrow, true], [TagArrow, true], [GrayFlag], [RedStack], [AArrow]]} />
        <Grip className="ml-[34px] mt-[2px]" />
        <Group slot="w-[29px]" className="ml-[7px]" items={[[GreenGears], [PaperFold, true], [TreeBlocks]]} />
        <Grip className="ml-[12px] mt-[2px]" />
        <Group slot="w-[29px]" className="ml-[5.5px]" items={[[RulerArrow], [DarkBox], [Weight]]} />
        <Grip className="ml-[14px] mt-[2px]" />
        <Group slot="w-[29px]" className="ml-[4.5px]" items={[[Camera]]} />
        <Grip className="ml-[12.5px] mt-[2px]" />
        <Group slot="w-[29.4px]" className="ml-[5px]" items={[[Swirl], [GlobeHand], [Axes], [Numbers], [TealPrism, true], [SwapLink]]} />
        <span className="ml-[8px] -translate-y-[8px] text-[13px] text-[#a8a8c0]">»</span>
        <div className="relative ml-[12px] h-[36px] w-[44px] shrink-0 font-['Liberation_Sans',sans-serif] italic leading-none">
          <span className="absolute left-[17px] top-0 text-[15px] font-bold text-[#e05a28]">3</span>
          <span className="absolute left-[2px] top-[6px] text-[21px] text-[#2c2ca8]">D</span>
          <span className="absolute left-[13px] top-[5px] text-[22px] text-[#e88a30]">S</span>
          <span className="absolute bottom-[1px] left-[6px] text-[11px] font-bold text-[#2040a8]">CATIA</span>
        </div>
      </div>

      <div className="flex h-[25px] shrink-0 items-center bg-[#cfd1e4] pl-[3px] text-[12.4px] text-[#333]">
        <span>Select an object or a command</span>
        <div className="ml-auto flex items-center">
          <div className="h-[21px] w-[314px] bg-white" />
          <div className="ml-0 flex h-[22px] w-[33px] items-center justify-center border-b border-r border-[#a0a0b0] bg-[#d8d9e6]">
            <svg viewBox="0 0 14 12" className="h-[12px] w-[14px]" fill="none" stroke="#666"><rect x="1" y="1" width="9" height="7" strokeWidth="1.4" /><path d="M11 10h2" /></svg>
          </div>
          <div className="ml-[2px] flex h-[22px] w-[35px] items-center justify-center border-b border-[#a0a0b0] bg-[#d8d9e6]">
            <svg viewBox="0 0 14 14" className="h-[14px] w-[14px]" fill="#e8f0f0" stroke="#668"><circle cx="7" cy="7" r="5.5" /><path d="M7 3v4h3" /></svg>
          </div>
        </div>
      </div>
    </div>
  );
}
